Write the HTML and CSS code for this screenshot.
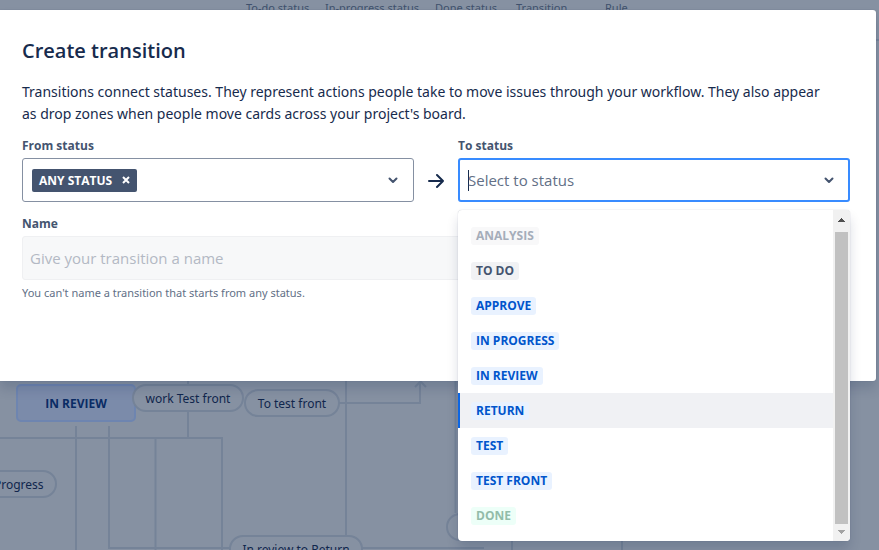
FILE: index.html
```
<!DOCTYPE html>
<html lang="en">
<head>
    <meta charset="UTF-8">
    <meta name="viewport" content="width=device-width, initial-scale=1.0">
    <title>Create transition</title>
    <link rel="stylesheet" href="styles.css">
</head>
<body>
    <div class="page">
        <!-- workflow diagram behind the dialog -->
        <div class="diagram">
            <svg class="lines" width="879" height="550" fill="none" stroke="#758398" stroke-width="2">
                <path d="M876 40h3M188 381v57M0 438h222v112M155.500 438v112M76 426v124M109 426v122h122M339 403h81v-20M415 387l5.500-5.500 5.500 5.500M346 381v155M362 548h122M455.500 381v132M512 541v9M622 541v9"/>
            </svg>
            <div class="node node-review">IN REVIEW</div>
            <div class="pill pill-work">work Test front</div>
            <div class="pill pill-test">To test front</div>
            <div class="pill pill-progress">In Progress</div>
            <div class="pill pill-return">In review to Return</div>
            <div class="pill pill-hidden"></div>
            <div class="legend">
                <span class="legend-todo">To-do status</span>
                <span class="legend-progress">In-progress status</span>
                <span class="legend-done">Done status</span>
                <span class="legend-transition">Transition</span>
                <span>Rule</span>
            </div>
        </div>

        <div class="dialog" role="dialog" aria-labelledby="title">
            <h1 class="title" id="title">Create transition</h1>
            <p class="text">Transitions connect statuses. They represent actions people take to move issues through your workflow. They also appear as drop zones when people move cards across your project's board.</p>

            <div class="row">
                <div class="field">
                    <label class="label" for="from">From status</label>
                    <div class="select">
                        <span class="tag">ANY STATUS
                            <button class="tag-close" type="button" aria-label="Remove any status">
                                <svg width="8" height="8" viewBox="0 0 8 8" fill="none" stroke="currentColor" stroke-width="2"><path d="M1 1l6 6M7 1l-6 6"/></svg>
                            </button>
                        </span>
                        <input class="select-input" id="from" type="text" role="combobox" aria-expanded="false">
                        <button class="arrow" type="button" aria-label="Open from status">
                            <svg width="10" height="8" viewBox="0 0 10 8" fill="none" stroke="currentColor" stroke-width="2" stroke-linecap="round" stroke-linejoin="round"><path d="M1.500 2.500L5 6 8.500 2.500"/></svg>
                        </button>
                    </div>
                </div>
                <svg class="direction" width="16" height="16" viewBox="0 0 16 16" fill="none" stroke="#172b4d" stroke-width="2" stroke-linecap="round" stroke-linejoin="round"><path d="M1 8h14M9 2l6 6-6 6"/></svg>
                <div class="field">
                    <label class="label" for="to">To status</label>
                    <div class="select focused">
                        <span class="caret"></span>
                        <input class="select-input" id="to" type="text" role="combobox" aria-expanded="true" aria-controls="menu" placeholder="Select to status">
                        <button class="arrow" type="button" aria-label="Close to status">
                            <svg width="10" height="8" viewBox="0 0 10 8" fill="none" stroke="currentColor" stroke-width="2" stroke-linecap="round" stroke-linejoin="round"><path d="M1.500 2.500L5 6 8.500 2.500"/></svg>
                        </button>
                    </div>
                    <div class="menu">
                        <ul class="options" id="menu" role="listbox">
                            <li class="option" role="option" aria-disabled="true"><span class="badge grey off">ANALYSIS</span></li>
                            <li class="option" role="option"><span class="badge grey">TO DO</span></li>
                            <li class="option" role="option"><span class="badge">APPROVE</span></li>
                            <li class="option" role="option"><span class="badge">IN PROGRESS</span></li>
                            <li class="option" role="option"><span class="badge">IN REVIEW</span></li>
                            <li class="option active" role="option"><span class="badge">RETURN</span></li>
                            <li class="option" role="option"><span class="badge">TEST</span></li>
                            <li class="option" role="option"><span class="badge">TEST FRONT</span></li>
                            <li class="option" role="option" aria-disabled="true"><span class="badge green">DONE</span></li>
                        </ul>
                        <div class="scroll">
                            <svg width="7" height="4" viewBox="0 0 7 4" fill="#505050"><path d="M3 0h1v1h1v1h1v1h1v1H0V3h1V2h1V1h1z"/></svg>
                            <div class="thumb"></div>
                            <svg width="7" height="4" viewBox="0 0 7 4" fill="#a3a3a3"><path d="M0 0h7v1H6v1H5v1H4v1H3V3H2V2H1V1H0z"/></svg>
                        </div>
                    </div>
                </div>
            </div>

            <div class="field name-field">
                <label class="label" for="name">Name</label>
                <input class="name" id="name" type="text" placeholder="Give your transition a name" disabled>
                <p class="hint">You can't name a transition that starts from any status.</p>
            </div>
        </div>
    </div>
</body>
</html>
```
FILE: styles.css
```
* {
    box-sizing: border-box;
}
body {
    margin: 0;
    font-family: "Open Sans", "Noto Sans", sans-serif;
    font-size: 15px;
    color: #172b4d;
    background-color: #8691a2;
}
.page {
    position: relative;
    min-height: 100vh;
    padding: 10px 3px 0 0;
    overflow: hidden;
}
.diagram {
    position: absolute;
    inset: 0;
    overflow: hidden;
    font-family: "Noto Sans", "Open Sans", sans-serif;
    font-size: 12px;
    color: #10264d;
}
.lines {
    position: absolute;
    top: 0;
    left: 0;
}
.legend {
    display: flex;
    padding-left: 246px;
    font-size: 11px;
    line-height: 16px;
    color: #40516d;
    white-space: nowrap;
}
.legend-todo {
    flex: 0 0 79px;
}
.legend-progress {
    flex: 0 0 110px;
}
.legend-done {
    flex: 0 0 81px;
}
.legend-transition {
    flex: 0 0 89px;
}
.node,
.pill {
    position: absolute;
    display: flex;
    align-items: center;
    justify-content: center;
    white-space: nowrap;
}
.node {
    border: 2px solid #6e85b0;
    border-radius: 5px;
    background-color: #7b8baa;
    font-family: "Open Sans", "Noto Sans", sans-serif;
    font-weight: 700;
    color: #0a2b64;
}
.pill {
    height: 28px;
    border: 2px solid #758398;
    border-radius: 14px;
    background-color: #8691a2;
}
.node-review {
    left: 16px;
    top: 384px;
    width: 120px;
    height: 38px;
}
.pill-work {
    left: 132px;
    top: 384px;
    width: 112px;
}
.pill-test {
    left: 244px;
    top: 389px;
    width: 96px;
}
.pill-progress {
    left: -34px;
    top: 470px;
    width: 91px;
}
.pill-return {
    left: 229px;
    top: 535px;
    width: 134px;
}
.pill-hidden {
    left: 446px;
    top: 513px;
    width: 60px;
}

.dialog {
    position: relative;
    padding: 27px 26px 79px 22px;
    border-radius: 0 3px 3px 0;
    background-color: #fff;
    box-shadow: 0 8px 12px rgba(9, 30, 66, 0.15), 0 0 1px rgba(9, 30, 66, 0.31);
}
.title {
    margin: 0 0 16px;
    font-size: 20px;
    font-weight: 600;
    line-height: 28px;
}
.text {
    margin: 0 0 12px;
    padding-right: 24px;
    font-family: "Noto Sans", "Open Sans", sans-serif;
    font-size: 14px;
    line-height: 22px;
}
.row {
    display: flex;
    align-items: flex-end;
}
.field {
    position: relative;
    flex: 1;
    min-width: 0;
}
.label {
    display: block;
    margin-bottom: 3px;
    font-size: 12px;
    font-weight: 700;
    line-height: 18px;
    color: #44546f;
}
.direction {
    flex: none;
    margin: 0 14px 13px;
}
.select {
    display: flex;
    align-items: center;
    height: 44px;
    padding: 0 9px;
    border: 1px solid #8590a2;
    border-radius: 3px;
}
.focused {
    padding: 0 8px;
    border: 2px solid #388bff;
}
.select-input {
    flex: 1;
    min-width: 0;
    padding: 0;
    border: none;
    outline: none;
    background: none;
    font: inherit;
    color: inherit;
}
.select-input::placeholder {
    color: #626f86;
    opacity: 1;
}
.caret {
    width: 1px;
    height: 21px;
    margin-right: -1px;
    background-color: #172b4d;
}
.arrow {
    display: flex;
    padding: 6px;
    border: none;
    background: none;
    color: #44546f;
}
.tag {
    display: flex;
    align-items: center;
    height: 23px;
    padding-left: 7px;
    border-radius: 2px;
    background-color: #44546f;
    font-size: 12px;
    font-weight: 700;
    color: #fff;
}
.tag-close {
    display: flex;
    padding: 7px;
    margin-left: 3px;
    border: none;
    background: none;
    color: #fff;
}

.menu {
    position: absolute;
    z-index: 1;
    top: calc(100% + 8px);
    left: 0;
    right: 0;
    display: flex;
    border-radius: 4px;
    background-color: #fff;
    box-shadow: 0 8px 12px rgba(9, 30, 66, 0.15), 0 0 1px rgba(9, 30, 66, 0.31);
    overflow: hidden;
}
.options {
    flex: 1;
    margin: 0;
    padding: 8px 0;
    list-style: none;
}
.option {
    display: flex;
    align-items: center;
    height: 35px;
    padding-left: 13px;
}
.active {
    background-color: #f0f1f4;
    box-shadow: inset 2px 0 0 #0c66e4;
}
.badge {
    padding: 0 5px;
    border-radius: 3px;
    background-color: #e9f2ff;
    font-size: 12px;
    font-weight: 700;
    line-height: 18px;
    color: #0055cc;
}
.grey {
    background-color: #f1f2f4;
    color: #44546f;
}
.off {
    background-color: #f8f8f9;
    color: #a5adba;
}
.green {
    background-color: #edfff8;
    color: #93bca9;
}
.scroll {
    display: flex;
    flex-direction: column;
    align-items: center;
    gap: 10px;
    width: 17px;
    padding: 8px 0 7px;
    background-color: #f1f1f1;
}
.thumb {
    flex: 1;
    width: 13px;
    margin-bottom: -4px;
    background-color: #c1c1c1;
}

.name {
    display: block;
    width: 100%;
    height: 44px;
    padding: 0 7px;
    border: 1px solid #eff0f2;
    border-radius: 3px;
    background-color: #f7f8f9;
    font: inherit;
}
.name::placeholder {
    color: #b3b9c4;
    opacity: 1;
}
.name-field {
    margin-top: 13px;
}
.hint {
    margin: 4px 0 0;
    font-family: "Noto Sans", "Open Sans", sans-serif;
    font-size: 11px;
    line-height: 18px;
    color: #626f86;
}
```
